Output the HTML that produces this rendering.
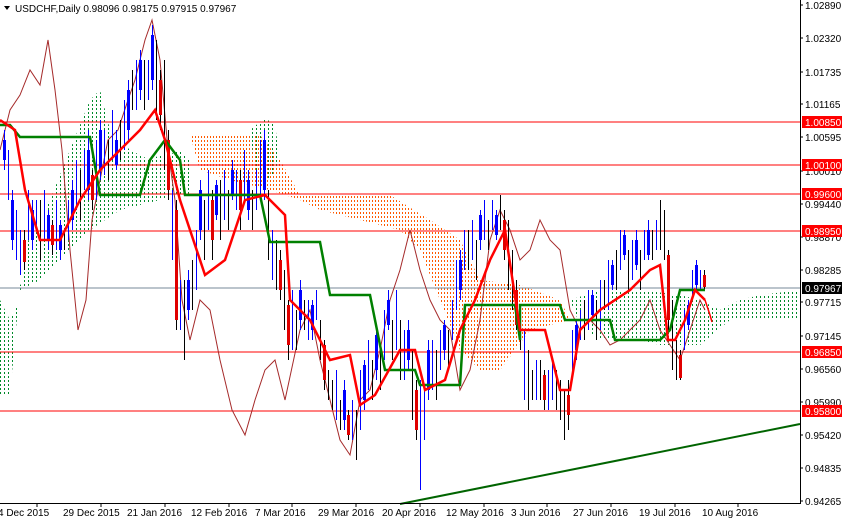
<!DOCTYPE html>
<html><head><meta charset="utf-8"><style>
html,body{margin:0;padding:0;background:#fff}
svg{display:block;font-family:"Liberation Sans",sans-serif}
</style></head><body>
<svg width="842" height="521" viewBox="0 0 842 521" xmlns="http://www.w3.org/2000/svg">
<defs>
<pattern id="po" width="3" height="4" patternUnits="userSpaceOnUse"><rect x="0" y="0" width="1" height="2" fill="#ff5a00" shape-rendering="crispEdges"/></pattern>
<pattern id="pg" width="4" height="4" patternUnits="userSpaceOnUse"><rect x="0" y="0" width="1" height="2" fill="#008a2a" shape-rendering="crispEdges"/></pattern>
</defs>
<rect width="842" height="521" fill="#fff"/>
<polygon fill="url(#pg)" points="0,300 10,320 20,300 20,290 40,280 60,250 80,230 100,200 120,180 140,170 160,160 180,150 190,160 190,195 140,195 100,200 90,215 60,250 40,270 20,285 10,395 0,395"/>
<polygon fill="url(#pg)" points="20,290 30,230 50,200 70,150 90,100 100,90 110,130 130,150 150,160 170,150 185,170 190,190 160,200 120,210 90,230 60,260 40,280"/>
<polygon fill="url(#po)" points="190,135 260,135 280,160 300,195 390,195 430,220 460,240 480,280 520,285 560,300 570,320 530,330 500,370 480,370 460,350 440,300 420,250 400,230 360,220 320,210 300,200 270,190 230,180 200,170"/>
<polygon fill="url(#pg)" points="570,300 600,290 640,290 680,295 700,300 720,310 740,300 760,295 800,290 800,320 730,320 700,345 660,345 640,340 600,340 580,325"/>
<polygon fill="url(#pg)" points="250,130 265,118 275,125 280,160 270,180 255,170"/>
<g stroke="#ff0000" stroke-width="1" shape-rendering="crispEdges">
<line x1="0" y1="122" x2="800" y2="122"/><line x1="0" y1="165" x2="800" y2="165"/>
<line x1="0" y1="194" x2="800" y2="194"/><line x1="0" y1="231" x2="800" y2="231"/>
<line x1="0" y1="352" x2="800" y2="352"/><line x1="0" y1="411" x2="800" y2="411"/>
</g>
<line x1="0" y1="288" x2="800" y2="288" stroke="#778899" shape-rendering="crispEdges"/>
<polyline fill="none" stroke="#a52a2a" stroke-width="1" points="0,150 10,110 20,95 30,70 40,85 48,40 55,90 62,150 70,250 78,330 86,300 92,220 100,180 108,140 118,130 128,100 135,80 145,40 152,20 160,60 168,150 175,200 182,300 190,340 200,300 210,310 220,360 232,410 245,435 255,400 265,370 275,360 285,400 300,330 310,310 320,360 330,400 340,440 350,455 360,400 370,390 380,350 390,300 400,270 410,230 420,270 430,300 440,320 450,330 460,390 470,370 480,320 490,240 500,210 510,230 520,260 530,250 540,220 550,240 560,250 570,310 580,330 590,320 600,330 610,345 620,340 630,330 640,320 650,300 660,330 670,345 680,360 690,330 700,300 705,310"/>
<g transform="translate(0.5,0)">
<path fill="none" stroke="#0000ff" stroke-width="1" d="M4,130V170M8,150V200M12,190V250M16,210V260M20,230V275M28,190V240M32,200V250M36,200V230M44,190V240M48,210V250M56,200V250M60,220V260M68,200V240M72,180V230M76,160V210M84,150V190M88,130V200M96,140V200M100,120V180M104,130V175M112,110V160M116,130V170M124,100V150M128,80V140M136,60V110M140,50V100M148,60V100M152,25V90M172,190V260M180,280V330M188,270V320M196,230V290M200,180V240M208,170V230M216,180V220M224,170V220M232,160V200M236,170V210M244,150V200M248,170V220M256,170V210M260,140V200M264,130V200M272,230V280M292,290V350M300,280V330M308,300V340M312,300V340M316,290V320M336,370V420M344,380V430M352,400V440M360,370V430M364,360V410M368,340V390M376,330V380M384,310V360M388,290V330M396,290V350M404,330V380M408,320V370M420,380V490M424,390V440M428,340V400M432,340V390M440,330V370M444,320V360M452,300V340M456,260V310M460,250V300M464,230V270M472,220V260M480,210V250M484,200V240M492,200V230M496,210V240M524,330V400M536,360V400M548,370V410M552,360V400M572,330V380M576,320V360M580,310V340M588,290V330M592,290V320M600,280V330M608,260V310M612,260V290M620,230V270M624,230V260M632,240V280M636,230V270M644,230V260M648,220V260M656,220V250M684,310V350M688,300V330M692,270V300M696,260V290M700,270V290"/>
<path fill="none" stroke="#0000ff" stroke-width="3" d="M4,140V160M12,200V240M32,210V240M48,215V240M60,225V250M72,190V220M88,150V190M100,130V170M116,140V165M128,90V130M140,60V90M152,35V80M188,280V310M200,190V230M216,185V215M232,170V195M248,180V210M264,140V190M300,290V320M312,305V330M344,390V420M364,365V400M376,335V370M388,300V325M408,330V360M428,350V390M444,325V350M460,260V290M480,215V240M496,215V235M576,325V350M592,295V315M612,265V285M624,235V255M636,240V265M648,230V255M688,305V325M696,265V285"/>
<path fill="none" stroke="#000" stroke-width="1" d="M24,230V270M40,200V260M52,220V255M64,230V250M80,170V220M92,170V210M108,140V180M120,120V160M132,70V110M144,60V110M156,40V120M160,70V130M164,60V170M168,130V200M176,200V330M184,280V360M192,260V310M204,200V260M212,190V260M220,180V240M228,190V230M240,170V230M252,190V230M268,190V260M276,240V290M280,250V300M284,270V330M288,300V360M296,310V350M304,300V330M320,320V360M324,340V390M328,370V400M332,380V410M340,400V430M348,410V440M356,410V460M372,360V400M380,350V390M392,320V360M400,320V380M412,350V420M416,380V440M436,350V400M448,330V370M468,230V270M476,240V280M488,220V250M500,195V230M504,210V260M508,220V290M512,250V310M516,280V330M520,310V350M528,350V410M532,370V400M540,360V400M544,370V410M556,370V410M560,380V420M564,390V440M568,380V430M584,300V340M596,300V340M604,280V310M616,250V290M628,250V290M640,250V290M652,230V260M660,200V250M664,210V260M668,250V330M672,300V370M676,340V380M680,350V380M704,270V290"/>
<path fill="none" stroke="#e00000" stroke-width="3" d="M24,240V262M52,225V245M92,175V200M160,80V115M168,140V190M176,210V320M212,200V240M240,180V210M280,260V290M288,305V345M324,345V380M348,415V435M416,390V430M504,220V250M516,290V325M544,375V400M568,395V415M668,255V320M680,355V378M704,275V287"/>
</g>
<polyline fill="none" stroke="#008000" stroke-width="2.5" points="0,125 10,125 20,137 90,137 100,195 140,195 150,160 165,140 180,160 185,195 260,195 270,242 320,242 330,295 370,295 385,370 415,370 420,385 460,385 465,305 515,305 520,340 520,305 560,305 565,320 610,320 615,340 660,340 670,330 680,290 705,290"/>
<polyline fill="none" stroke="#ff0000" stroke-width="2.5" points="0,120 15,130 25,190 40,240 60,240 80,200 100,170 120,150 140,130 155,110 165,140 180,200 205,275 225,260 245,200 265,195 285,215 290,300 310,320 330,360 350,355 360,405 375,395 400,350 415,350 425,390 445,380 460,330 475,300 490,260 505,230 520,330 545,330 560,390 570,390 580,330 600,310 630,290 650,270 660,265 668,340 675,340 685,320 695,290 705,300"/>
<polyline fill="none" stroke="#ff0000" stroke-width="1.5" points="705,300 710,315 712,322"/>
<line x1="400" y1="504" x2="800" y2="424" stroke="#006400" stroke-width="2"/>
<line x1="800.5" y1="0" x2="800.5" y2="504" stroke="#000"/>
<line x1="0" y1="503.5" x2="801" y2="503.5" stroke="#000"/>
<g font-size="10" fill="#000">
<text x="805" y="9">1.02890</text><text x="805" y="42">1.02320</text><text x="805" y="76">1.01735</text>
<text x="805" y="108">1.01165</text><text x="805" y="141">1.00595</text><text x="805" y="175">1.00010</text>
<text x="805" y="208">0.99440</text><text x="805" y="241">0.98870</text><text x="805" y="274">0.98285</text>
<text x="805" y="306">0.97715</text><text x="805" y="340">0.97145</text><text x="805" y="373">0.96560</text>
<text x="805" y="406">0.95990</text><text x="805" y="439">0.95420</text><text x="805" y="472">0.94835</text>
<text x="805" y="505">0.94265</text>
</g>
<g stroke="#000"><path d="M800,5h3M800,38h3M800,72h3M800,104h3M800,137h3M800,171h3M800,204h3M800,237h3M800,270h3M800,302h3M800,336h3M800,369h3M800,402h3M800,435h3M800,468h3M800,501h3"/></g>
<g font-size="10" fill="#fff">
<rect x="802" y="116" width="40" height="12" fill="#ff0000"/><text x="805" y="126">1.00850</text>
<rect x="802" y="159" width="40" height="12" fill="#ff0000"/><text x="805" y="169">1.00100</text>
<rect x="802" y="188" width="40" height="12" fill="#ff0000"/><text x="805" y="198">0.99600</text>
<rect x="802" y="225" width="40" height="12" fill="#ff0000"/><text x="805" y="235">0.98950</text>
<rect x="802" y="282" width="40" height="12" fill="#000"/><text x="805" y="292">0.97967</text>
<rect x="802" y="346" width="40" height="12" fill="#ff0000"/><text x="805" y="356">0.96850</text>
<rect x="802" y="405" width="40" height="12" fill="#ff0000"/><text x="805" y="415">0.95800</text>
</g>
<g font-size="10" fill="#000">
<text x="-2" y="516">4 Dec 2015</text><text x="63" y="516">29 Dec 2015</text><text x="127" y="516">21 Jan 2016</text>
<text x="191" y="516">12 Feb 2016</text><text x="255" y="516">7 Mar 2016</text><text x="318" y="516">29 Mar 2016</text>
<text x="382" y="516">20 Apr 2016</text><text x="446" y="516">12 May 2016</text><text x="511" y="516">3 Jun 2016</text>
<text x="573" y="516">27 Jun 2016</text><text x="639" y="516">19 Jul 2016</text><text x="702" y="516">10 Aug 2016</text>
</g>
<g stroke="#000"><path d="M37,503v4M101,503v4M165,503v4M229,503v4M292,503v4M356,503v4M420,503v4M484,503v4M547,503v4M611,503v4M675,503v4M738,503v4"/></g>
<polygon points="4,6 10,6 7,10" fill="#000"/>
<text x="15" y="12" font-size="10" fill="#000">USDCHF,Daily  0.98096 0.98175 0.97915 0.97967</text>
</svg>
</body></html>
